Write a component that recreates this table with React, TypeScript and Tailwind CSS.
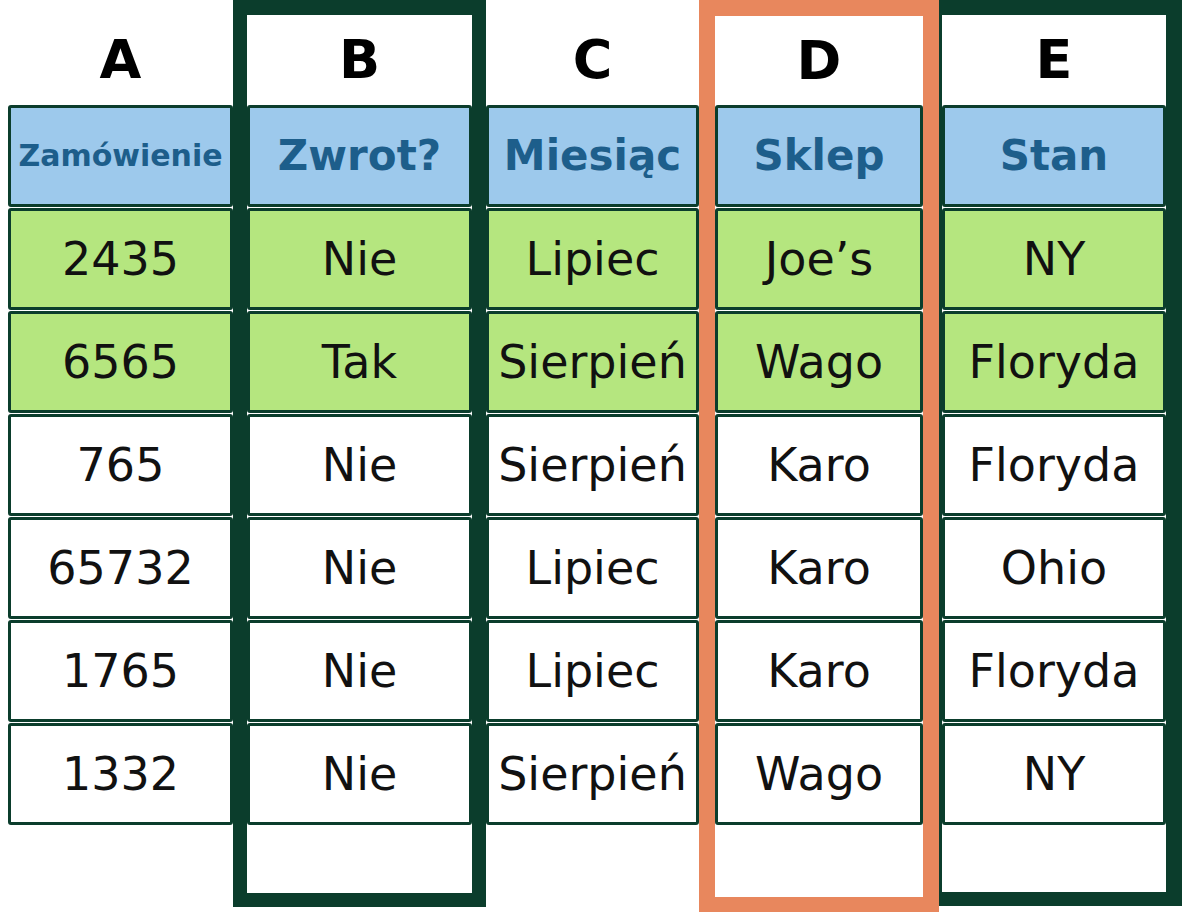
const columns = [
  {
    letter: "A",
    head: "Zamówienie",
    small: true,
    cells: ["2435", "6565", "765", "65732", "1765", "1332"],
  },
  {
    letter: "B",
    head: "Zwrot?",
    cells: ["Nie", "Tak", "Nie", "Nie", "Nie", "Nie"],
  },
  {
    letter: "C",
    head: "Miesiąc",
    cells: ["Lipiec", "Sierpień", "Sierpień", "Lipiec", "Lipiec", "Sierpień"],
  },
  {
    letter: "D",
    head: "Sklep",
    cells: ["Joe’s", "Wago", "Karo", "Karo", "Karo", "Wago"],
  },
  {
    letter: "E",
    head: "Stan",
    cells: ["NY", "Floryda", "Floryda", "Ohio", "Floryda", "NY"],
  },
];

// outer wrapper + height of the letter row for each column
const frames = [
  { wrap: "ml-[8px] w-[225px] pt-[15px]", letterH: "h-[90px]" },
  {
    wrap: "w-[253px] h-[907px] border-[14px] border-t-[15px] border-[#0b3d2c]",
    letterH: "h-[90px]",
  },
  { wrap: "w-[213px] pt-[15px]", letterH: "h-[90px]" },
  {
    wrap: "w-[240px] h-[912px] border-[16px] border-b-[15px] border-[#e8875d]",
    letterH: "h-[89px]",
  },
  {
    wrap: "w-[243px] h-[906px] border-l-[3px] border-t-[15px] border-r-[16px] border-b-[14px] border-[#0b3d2c]",
    letterH: "h-[90px]",
  },
];

const Cell = ({
  children,
  bg,
}: {
  children: React.ReactNode;
  bg: string;
}) => (
  <div
    className={`h-[102px] border-[3px] border-[#0b3d2c] rounded-[3px] flex items-center justify-center ${bg}`}
  >
    {children}
  </div>
);

export default function App() {
  return (
    <div
      className="w-[1182px] h-[912px] bg-white flex items-start overflow-hidden"
      style={{ fontFamily: '"DejaVu Sans", sans-serif' }}
    >
      {columns.map((col, ci) => (
        <div key={col.letter} className={`shrink-0 ${frames[ci].wrap}`}>
          <div
            className={`${frames[ci].letterH} flex items-center justify-center text-[54px] font-bold leading-none text-black`}
          >
            {col.letter}
          </div>
          <div className="flex flex-col gap-[1px]">
            <Cell bg="bg-[#9dc9ec]">
              <span
                className={`font-bold leading-none text-[#1d5e8b] ${col.small ? "text-[30px]" : "text-[42px]"}`}
              >
                {col.head}
              </span>
            </Cell>
            {col.cells.map((v, ri) => (
              <Cell key={ri} bg={ri < 2 ? "bg-[#b5e67f]" : "bg-white"}>
                <span className="text-[46px] leading-none text-[#111]">
                  {v}
                </span>
              </Cell>
            ))}
          </div>
        </div>
      ))}
    </div>
  );
}
